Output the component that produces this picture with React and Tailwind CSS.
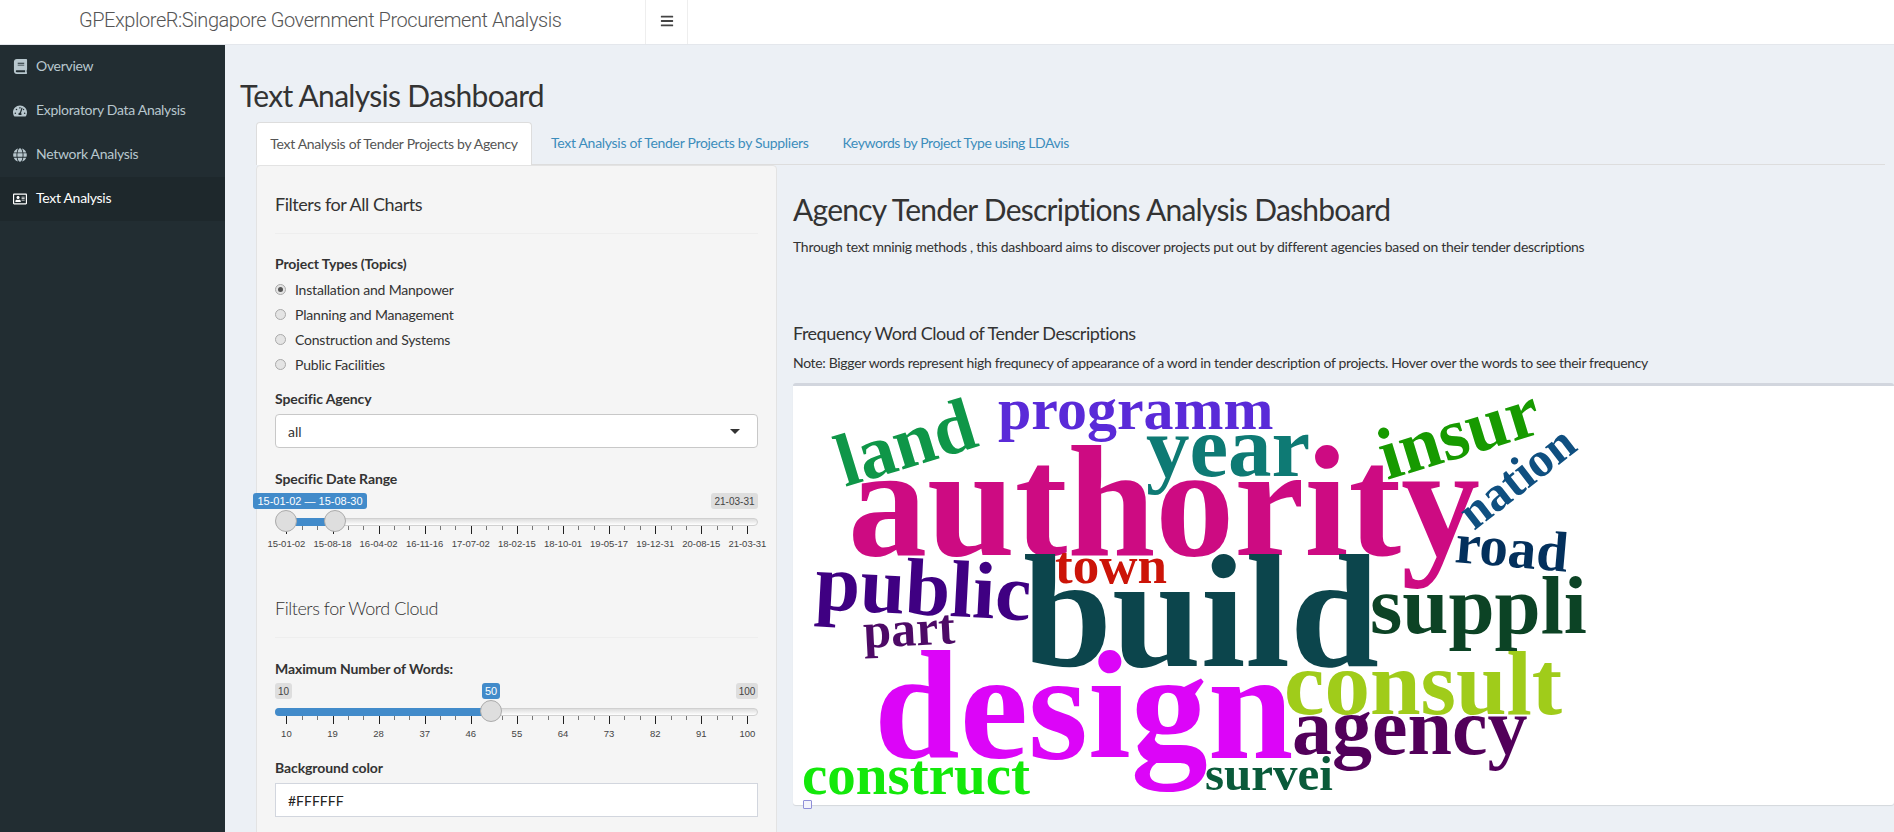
import React from 'react';
import { FaBook, FaTachometerAlt, FaGlobe, FaRegAddressCard, FaBars } from 'react-icons/fa';

const menu = [
  { name: 'Overview', icon: FaBook, size: 15 },
  { name: 'Exploratory Data Analysis', icon: FaTachometerAlt, size: 14 },
  { name: 'Network Analysis', icon: FaGlobe, size: 14 },
  { name: 'Text Analysis', icon: FaRegAddressCard, size: 14, active: true },
];

const topics = ['Installation and Manpower', 'Planning and Management', 'Construction and Systems', 'Public Facilities'];

const dateTicks = ['15-01-02', '15-08-18', '16-04-02', '16-11-16', '17-07-02', '18-02-15', '18-10-01', '19-05-17', '19-12-31', '20-08-15', '21-03-31'];
const wordTicks = ['10', '19', '28', '37', '46', '55', '64', '73', '82', '91', '100'];

// word cloud, coordinates are relative to the white box
const words = [
  { t: 'authority', x: 55, y: 172, s: 158, c: '#cd0b82' },
  { t: 'build', x: 230, y: 283, s: 160, c: '#0c454c' },
  { t: 'design', x: 81, y: 375, s: 154, c: '#dc05f8' },
  { t: 'consult', x: 491, y: 331, s: 91, c: '#a0cc1a' },
  { t: 'agency', x: 499, y: 371, s: 80, c: '#52005a' },
  { t: 'suppli', x: 577, y: 250, s: 83, c: '#0c4325' },
  { t: 'public', x: 21, y: 226, s: 81, c: '#3f0082', r: 3 },
  { t: 'part', x: 71, y: 265, s: 50, c: '#4d0a66', r: -3 },
  { t: 'town', x: 262, y: 200, s: 53, c: '#cc1408' },
  { t: 'land', x: 52, y: 104, s: 75, c: '#0f9648', r: -17 },
  { t: 'programm', x: 205, y: 46, s: 60, c: '#5a2ad8' },
  { t: 'year', x: 353, y: 93, s: 87, c: '#0e7a74' },
  { t: 'insur', x: 594, y: 97, s: 74, c: '#179a00', r: -17 },
  { t: 'nation', x: 681, y: 148, s: 49, c: '#0f4f80', r: -38 },
  { t: 'road', x: 661, y: 179, s: 57, c: '#03305c', r: 5 },
  { t: 'construct', x: 9, y: 411, s: 57, c: '#13e80a' },
  { t: 'survei', x: 412, y: 407, s: 49, c: '#0a5a3a' },
];

const Slider = ({ ticks, from, to, chips }) => {
  const minors = [];
  for (let i = 0; i <= 30; i++) {
    if (i % 3 !== 0) minors.push(11.4 + (i * 46.1) / 3);
  }
  return (
    <div className="relative h-[70px] w-[483px] font-['Liberation_Sans',sans-serif]">
      {chips.map((c) => (
        <span
          key={c.label}
          className={`absolute top-[4px] flex h-[16px] items-center justify-center rounded-[3px] ${c.blue ? 'bg-[#428bca] text-[11px] text-white' : 'bg-[#dedede] text-[10px] text-[#444]'}`}
          style={{ left: c.left, width: c.width }}
        >
          {c.label}
        </span>
      ))}
      <div className="absolute left-0 right-0 top-[29px] h-[8px] rounded-[4px] border border-[#d0d0d0] bg-linear-to-b from-[#dddddd] to-white" />
      <div className="absolute top-[29px] h-[8px] rounded-l-[4px] bg-[#428bca]" style={{ left: from, width: to - from }} />
      {minors.map((x) => (
        <div key={x} className="absolute top-[37px] h-[4px] w-px bg-[#777]" style={{ left: x }} />
      ))}
      {ticks.map((t, i) => (
        <React.Fragment key={t}>
          <div className="absolute top-[37px] h-[8px] w-px bg-[#222]" style={{ left: 11.4 + i * 46.1 }} />
          <span className="absolute top-[49px] w-[46px] -translate-x-1/2 text-center text-[9.5px] leading-[12px] text-[#444]" style={{ left: 11.4 + i * 46.1 }}>
            {t}
          </span>
        </React.Fragment>
      ))}
      {chips[0].handles.map((x) => (
        <div key={x} className="absolute top-[21px] h-[22px] w-[22px] -translate-x-1/2 rounded-full border border-[#ababab] bg-[#dedede]" style={{ left: x }} />
      ))}
    </div>
  );
};

const Label = ({ children, className = '' }) => (
  <div className={`h-[20px] text-[14px] font-bold leading-[20px] tracking-[-0.1px] text-[#333] ${className}`}>{children}</div>
);

const App = () => {
  return (
    <div className="flex h-[832px] w-[1894px] flex-col overflow-hidden bg-[#ecf0f5] font-['Lato',sans-serif] text-[#333]">
      <header className="flex h-[45px] shrink-0 border-b border-[#e4e7ec] bg-white">
        <div className="flex w-[645px] items-center pb-[4px] pl-[79px] font-['Roboto',sans-serif] text-[20px] font-light tracking-[-0.44px] text-[#555]">
          GPExploreR:Singapore Government Procurement Analysis
        </div>
        <div className="flex w-[43px] items-center justify-center border-x border-[#eeeeee] pb-[3px] text-[#444]">
          <FaBars size={14} />
        </div>
      </header>

      <div className="flex min-h-0 flex-1">
        <aside className="w-[225px] shrink-0 bg-[#222d32] text-[14px] text-[#b8c7ce]">
          {menu.map((item) => {
            const Icon = item.icon;
            return (
              <div key={item.name} className={`flex h-[44px] items-center pl-[13px] ${item.active ? 'bg-[#1e282c] text-white' : ''}`}>
                <span className="flex w-[23px] shrink-0 pb-[1px]">
                  <Icon size={item.size} />
                </span>
                <span className="pb-[3px] tracking-[-0.3px]">{item.name}</span>
              </div>
            );
          })}
        </aside>

        <main className="min-w-0 flex-1 pl-[15px]">
          <h1 className="mt-[34px] h-[33px] text-[30px] leading-[33px] tracking-[-0.7px] text-[#333]">Text Analysis Dashboard</h1>

          <div className="ml-[16px] mr-[9px] mt-[10px] flex h-[43px] border-b border-[#dddddd] text-[14px] tracking-[-0.3px]">
            <div className="flex h-[43px] w-[276px] items-center justify-center rounded-t-[4px] border border-b-0 border-[#dddddd] bg-white pb-[2px] text-[#555]">
              Text Analysis of Tender Projects by Agency
            </div>
            <div className="ml-[4px] flex h-[42px] items-center px-[15px] pb-[1px] text-[#3c8dbc]">Text Analysis of Tender Projects by Suppliers</div>
            <div className="ml-[4px] flex h-[42px] items-center px-[15px] pb-[1px] tracking-[-0.4px] text-[#3c8dbc]">Keywords by Project Type using LDAvis</div>
          </div>

          <div className="ml-[16px] flex">
            <section className="h-[700px] w-[521px] shrink-0 rounded-[4px] border border-[#e3e3e3] bg-[#f5f5f5] px-[18px] pt-[28px]">
              <h3 className="h-[20px] text-[18px] leading-[20px] tracking-[-0.45px]">Filters for All Charts</h3>
              <hr className="mt-[19px] border-[#eeeeee]" />
              <Label className="mt-[20px]">Project Types (Topics)</Label>
              <div className="mt-[3px]">
                {topics.map((t, i) => (
                  <div key={t} className="flex h-[25px] items-center text-[14px] tracking-[-0.2px]">
                    <span className="flex h-[11px] w-[11px] items-center justify-center rounded-full border border-[#aaaaaa] bg-[#e4e4e4]">
                      {i === 0 && <span className="h-[5px] w-[5px] rounded-full bg-[#555]" />}
                    </span>
                    <span className="ml-[9px]">{t}</span>
                  </div>
                ))}
              </div>
              <Label className="mt-[12px]">Specific Agency</Label>
              <div className="relative mt-[5px] flex h-[34px] items-center rounded-[4px] border border-[#c8c8c8] bg-white pl-[12px] text-[14px]">
                all
                <span className="absolute right-[17px] top-[14px] h-0 w-0 border-x-[5px] border-t-[5px] border-x-transparent border-t-[#333]" />
              </div>
              <Label className="mt-[21px]">Specific Date Range</Label>
              <Slider
                ticks={dateTicks}
                from={11}
                to={60}
                chips={[
                  { label: '15-01-02 — 15-08-30', blue: true, left: -22, width: 114, handles: [11.4, 60] },
                  { label: '21-03-31', left: 436, width: 47 },
                ]}
              />
              <h3 className="mt-[39px] h-[20px] text-[18px] font-light leading-[20px] tracking-[-0.45px]">Filters for Word Cloud</h3>
              <hr className="mt-[19px] border-[#eeeeee]" />
              <Label className="mt-[21px]">Maximum Number of Words:</Label>
              <Slider
                ticks={wordTicks}
                from={0}
                to={216}
                chips={[
                  { label: '50', blue: true, left: 207, width: 18, handles: [216] },
                  { label: '10', left: 0, width: 17 },
                  { label: '100', left: 461, width: 22 },
                ]}
              />
              <Label className="mt-[9px]">Background color</Label>
              <div className="mt-[5px] flex h-[34px] items-center border border-[#d2d6de] bg-white pl-[12px] text-[14px] text-[#222]">#FFFFFF</div>
            </section>

            <section className="min-w-0 flex-1 pl-[16px]">
              <h2 className="mt-[28px] h-[33px] text-[30px] leading-[33px] tracking-[-0.75px]">Agency Tender Descriptions Analysis Dashboard</h2>
              <p className="mt-[11px] h-[20px] text-[14px] leading-[20px] tracking-[-0.28px]">
                Through text mninig methods , this dashboard aims to discover projects put out by different agencies based on their tender descriptions
              </p>
              <h4 className="mt-[66px] h-[20px] text-[18px] leading-[20px] tracking-[-0.5px]">Frequency Word Cloud of Tender Descriptions</h4>
              <p className="mt-[10px] h-[20px] text-[14px] leading-[20px] tracking-[-0.33px]">
                Note: Bigger words represent high frequnecy of appearance of a word in tender description of projects. Hover over the words to see their frequency
              </p>
              <div className="relative mt-[10px] h-[422px] w-[1101px] rounded-[3px] border-t-[3px] border-[#d2d6de] bg-white shadow-[0_1px_1px_rgba(0,0,0,0.1)]">
                <svg width="1101" height="419" className="block" style={{ marginTop: -3, overflow: 'visible' }}>
                  {words.map((w) => (
                    <text
                      key={w.t}
                      x={w.x}
                      y={w.y}
                      fill={w.c}
                      fontSize={w.s}
                      fontWeight="700"
                      fontFamily="'Liberation Serif', serif"
                      transform={w.r ? `rotate(${w.r} ${w.x} ${w.y})` : undefined}
                    >
                      {w.t}
                    </text>
                  ))}
                </svg>
                <span className="absolute bottom-[-4px] left-[10px] h-[9px] w-[9px] rounded-[1px] border border-[#8f8fd8] bg-[#f4f4fb]" />
              </div>
            </section>
          </div>
        </main>
      </div>
    </div>
  );
};

export default App;
